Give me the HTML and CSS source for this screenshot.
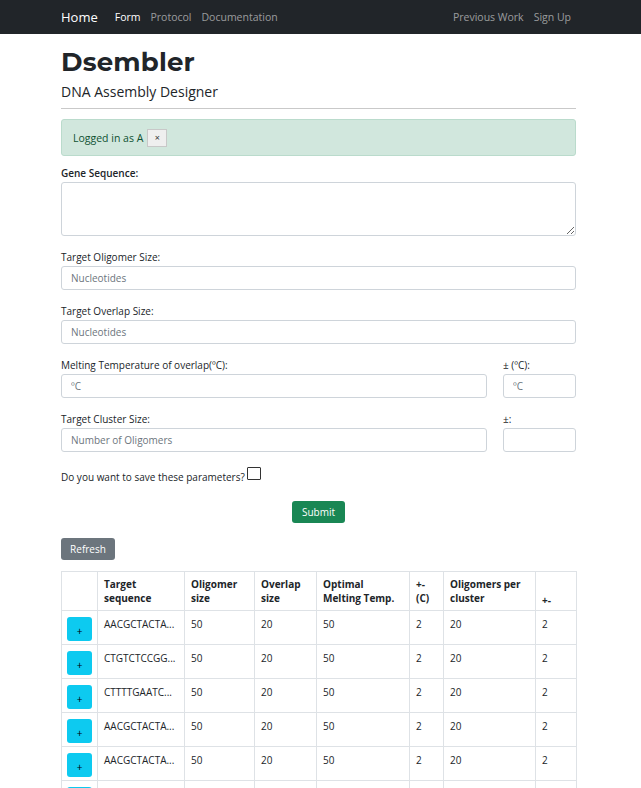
FILE: index.html
```html
<!DOCTYPE html>
<html>
<head>
<meta charset="utf-8">
<link rel="stylesheet" href="styles.css">
</head>
<body>
<nav class="navbar">
  <div class="nav-inner">
    <div class="nav-left">
      <span class="brand">Home</span>
      <span class="nav-link active">Form</span>
      <span class="nav-link">Protocol</span>
      <span class="nav-link">Documentation</span>
    </div>
    <div class="nav-right">
      <span class="nav-link">Previous Work</span>
      <span class="nav-link">Sign Up</span>
    </div>
  </div>
</nav>
<main class="container">
  <h1 class="title">Dsembler</h1>
  <p class="subtitle">DNA Assembly Designer</p>
  <hr class="rule">
  <div class="alert">Logged in as A <span class="close">×</span></div>

  <div class="group">
    <label class="label bold">Gene Sequence:</label>
    <textarea class="field textarea"></textarea>
  </div>
  <div class="group">
    <label class="label">Target Oligomer Size:</label>
    <input class="field" placeholder="Nucleotides">
  </div>
  <div class="group">
    <label class="label">Target Overlap Size:</label>
    <input class="field" placeholder="Nucleotides">
  </div>
  <div class="row">
    <div class="group grow">
      <label class="label">Melting Temperature of overlap(ºC):</label>
      <input class="field" placeholder="ºC">
    </div>
    <div class="group small">
      <label class="label">± (ºC):</label>
      <input class="field" placeholder="ºC">
    </div>
  </div>
  <div class="row">
    <div class="group grow">
      <label class="label">Target Cluster Size:</label>
      <input class="field" placeholder="Number of Oligomers">
    </div>
    <div class="group small">
      <label class="label">±:</label>
      <input class="field">
    </div>
  </div>
  <div class="save">Do you want to save these parameters?<span class="check"></span></div>
  <div class="submit-row"><button class="btn btn-success">Submit</button></div>
  <button class="btn btn-secondary">Refresh</button>

  <table class="table">
    <colgroup>
      <col style="width:36px"><col style="width:87px"><col style="width:70px"><col style="width:62px"><col style="width:93px"><col style="width:34px"><col style="width:92px"><col style="width:41px">
    </colgroup>
    <thead>
      <tr><th></th><th>Target<br>sequence</th><th>Oligomer<br>size</th><th>Overlap<br>size</th><th>Optimal<br>Melting Temp.</th><th>+-<br>(C)</th><th>Oligomers per<br>cluster</th><th class="bottom">+-</th></tr>
    </thead>
    <tbody>
      <tr><td><button class="btn-info">+</button></td><td>AACGCTACTA...</td><td>50</td><td>20</td><td>50</td><td>2</td><td>20</td><td>2</td></tr>
      <tr><td><button class="btn-info">+</button></td><td>CTGTCTCCGG...</td><td>50</td><td>20</td><td>50</td><td>2</td><td>20</td><td>2</td></tr>
      <tr><td><button class="btn-info">+</button></td><td>CTTTTGAATC...</td><td>50</td><td>20</td><td>50</td><td>2</td><td>20</td><td>2</td></tr>
      <tr><td><button class="btn-info">+</button></td><td>AACGCTACTA...</td><td>50</td><td>20</td><td>50</td><td>2</td><td>20</td><td>2</td></tr>
      <tr><td><button class="btn-info">+</button></td><td>AACGCTACTA...</td><td>50</td><td>20</td><td>50</td><td>2</td><td>20</td><td>2</td></tr>
      <tr><td><button class="btn-info">+</button></td><td></td><td></td><td></td><td></td><td></td><td></td><td></td></tr>
    </tbody>
  </table>
</main>
</body>
</html>
```
FILE: styles.css
```css
* { box-sizing: border-box; }
body {
  margin: 0;
  font-family: "Open Sans", "Noto Sans", sans-serif;
  font-size: 10px;
  color: #212529;
  background: #fff;
  overflow: hidden;
}
.navbar {
  background: #212529;
  height: 34px;
}
.nav-inner {
  width: 515px;
  margin-left: 61px;
  height: 34px;
  display: flex;
  align-items: center;
  justify-content: space-between;
}
.nav-left, .nav-right { display: flex; align-items: center; }
.brand { color: #fff; font-size: 13px; margin-right: 17px; }
.nav-link { color: rgba(255,255,255,0.55); font-size: 10.5px; margin-right: 10px; }
.nav-right .nav-link:last-child { margin-right: 5px; }
.nav-link.active { color: #fff; }
.container {
  width: 515px;
  margin-left: 61px;
}
.title {
  font-family: "Montserrat", "Lato", "Open Sans", sans-serif;
  font-weight: 700;
  font-size: 26px;
  line-height: 32px;
  margin: 12px 0 0;
  letter-spacing: 0.2px;
}
.subtitle {
  font-size: 14px;
  margin: 4px 0 0;
  line-height: 20px;
}
.rule {
  border: 0;
  border-top: 1.5px solid #c9c9c9;
  margin: 6px 0 10px;
}
.alert {
  background: #d1e7dd;
  border: 1px solid #badbcc;
  color: #0f5132;
  border-radius: 3px;
  height: 37px;
  padding-left: 11px;
  display: flex;
  align-items: center;
  font-size: 10.5px;
}
.close {
  display: inline-flex;
  align-items: center;
  justify-content: center;
  width: 20px;
  height: 18px;
  margin-left: 4px;
  background: #efefef;
  border: 1px solid #c8c8c8;
  color: #333;
  font-size: 9px;
}
.group { display: flex; flex-direction: column; margin-bottom: 14px; }
.alert + .group { margin-top: 10px; }
.label { line-height: 14px; margin-bottom: 2px; }
.label.bold { font-weight: 600; }
.field {
  height: 24px;
  border: 1px solid #ced4da;
  border-radius: 3px;
  padding: 0 9px;
  font-family: inherit;
  font-size: 10px;
  color: #212529;
}
.field::placeholder { color: #6c757d; }
.textarea { height: 54px; resize: vertical; }
.row { display: flex; gap: 16px; }
.grow { flex: 1; }
.small { width: 73px; }
.save {
  display: flex;
  align-items: flex-end;
  height: 14px;
  line-height: 14px;
  margin-top: 4px;
}
.check {
  display: inline-block;
  width: 14px;
  height: 13px;
  border: 1px solid #333;
  border-radius: 1px;
  margin-left: 2px;
  margin-bottom: 4px;
}
.submit-row { display: flex; justify-content: center; margin-top: 17px; margin-bottom: 15px; }
.btn {
  border: 0;
  border-radius: 3px;
  height: 22px;
  color: #fff;
  font-family: inherit;
  font-size: 10px;
  padding: 0 6px;
}
.btn-success { background: #198754; width: 53px; }
.btn-secondary { background: #6c757d; width: 54px; display: block; }
.table {
  margin-top: 11px;
  width: 515px;
  border-collapse: collapse;
  table-layout: fixed;
}
.table th, .table td {
  border: 1px solid #dee2e6;
  text-align: left;
  vertical-align: top;
  padding: 6px 6px 0;
  font-size: 10px;
  line-height: 14px;
}
.table th { font-weight: 700; height: 39px; padding-top: 5px; }
.table th.bottom { vertical-align: bottom; padding-bottom: 3px; }
.table td { height: 34px; }
.table td:first-child { padding: 6px 5px 0; }
.btn-info {
  background: #0dcaf0;
  border: 0;
  border-radius: 3px;
  width: 25px;
  height: 24px;
  color: #000;
  font-size: 10px;
  font-family: inherit;
  padding: 0;
  padding-top: 3px;
}
```
